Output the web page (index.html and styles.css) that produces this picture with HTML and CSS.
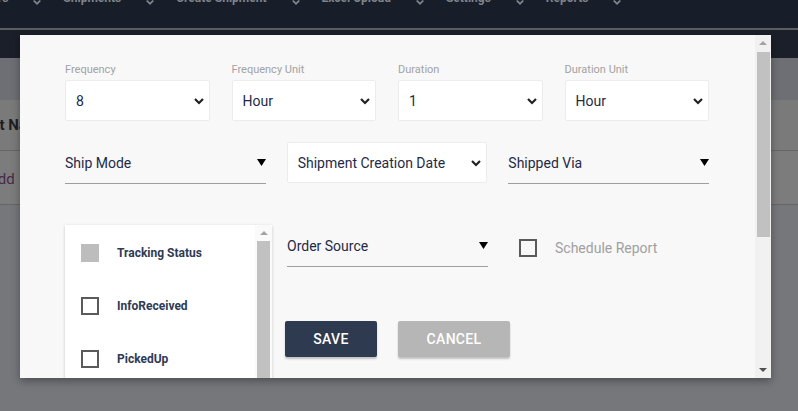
FILE: index.html
```html
<!DOCTYPE html>
<html lang="en">
<head>
    <meta charset="UTF-8">
    <meta name="viewport" content="width=device-width, initial-scale=1.0">
    <title>Schedule Report</title>
    <link rel="stylesheet" href="styles.css">
</head>
<body>
    <div class="page">
        <header class="topnav">
            <ul class="nav-links">
                <li>Orders <svg class="caret" viewBox="0 0 8 6"><path d="M0 1 L4 5 L8 1 L6.5 0 L4 2.5 L1.5 0 Z"/></svg></li>
                <li>Shipments <svg class="caret" viewBox="0 0 8 6"><path d="M0 1 L4 5 L8 1 L6.5 0 L4 2.5 L1.5 0 Z"/></svg></li>
                <li>Create Shipment <svg class="caret" viewBox="0 0 8 6"><path d="M0 1 L4 5 L8 1 L6.5 0 L4 2.5 L1.5 0 Z"/></svg></li>
                <li>Excel Upload <svg class="caret" viewBox="0 0 8 6"><path d="M0 1 L4 5 L8 1 L6.5 0 L4 2.5 L1.5 0 Z"/></svg></li>
                <li>Settings <svg class="caret" viewBox="0 0 8 6"><path d="M0 1 L4 5 L8 1 L6.5 0 L4 2.5 L1.5 0 Z"/></svg></li>
                <li>Reports <svg class="caret" viewBox="0 0 8 6"><path d="M0 1 L4 5 L8 1 L6.5 0 L4 2.5 L1.5 0 Z"/></svg></li>
            </ul>
        </header>
        <div class="subnav"></div>
        <div class="page-title"></div>
        <div class="table-head"><span>Report Name</span></div>
        <div class="table-row"><span>Add</span></div>
    </div>

    <div class="modal">
        <div class="modal-body">
            <div class="row-four">
                <div class="field">
                    <label>Frequency</label>
                    <div class="select-box"><span>8</span><svg class="chev" viewBox="0 0 10 7"><polyline points="1,1 5,5 9,1"/></svg></div>
                </div>
                <div class="field">
                    <label>Frequency Unit</label>
                    <div class="select-box"><span>Hour</span><svg class="chev" viewBox="0 0 10 7"><polyline points="1,1 5,5 9,1"/></svg></div>
                </div>
                <div class="field">
                    <label>Duration</label>
                    <div class="select-box"><span>1</span><svg class="chev" viewBox="0 0 10 7"><polyline points="1,1 5,5 9,1"/></svg></div>
                </div>
                <div class="field">
                    <label>Duration Unit</label>
                    <div class="select-box"><span>Hour</span><svg class="chev" viewBox="0 0 10 7"><polyline points="1,1 5,5 9,1"/></svg></div>
                </div>
            </div>

            <div class="row-three">
                <div class="md-select"><span>Ship Mode</span><svg class="tri" viewBox="0 0 9 7"><polygon points="0,0 9,0 4.5,7"/></svg></div>
                <div class="select-box tall"><span>Shipment Creation Date</span><svg class="chev" viewBox="0 0 10 7"><polyline points="1,1 5,5 9,1"/></svg></div>
                <div class="md-select"><span>Shipped Via</span><svg class="tri" viewBox="0 0 9 7"><polygon points="0,0 9,0 4.5,7"/></svg></div>
            </div>

            <div class="row-bottom">
                <div class="status-list">
                    <ul class="status-items">
                        <li><span class="check disabled"></span>Tracking Status</li>
                        <li><span class="check"></span>InfoReceived</li>
                        <li><span class="check"></span>PickedUp</li>
                        <li><span class="check"></span>InTransit</li>
                    </ul>
                    <div class="list-scroll">
                        <svg class="arrow" viewBox="0 0 8 4"><polygon points="0,4 8,4 4,0"/></svg>
                        <div class="list-thumb"></div>
                    </div>
                </div>
                <div class="middle-col">
                    <div class="md-select"><span>Order Source</span><svg class="tri" viewBox="0 0 9 7"><polygon points="0,0 9,0 4.5,7"/></svg></div>
                    <div class="actions">
                        <button class="btn btn-save">Save</button>
                        <button class="btn btn-cancel">Cancel</button>
                    </div>
                </div>
                <div class="schedule">
                    <span class="check"></span>
                    <span class="schedule-text">Schedule Report</span>
                </div>
            </div>
        </div>
        <div class="modal-scroll">
            <svg class="arrow up" viewBox="0 0 8 4"><polygon points="0,4 8,4 4,0"/></svg>
            <div class="modal-thumb"></div>
            <div class="spacer"></div>
            <svg class="arrow down" viewBox="0 0 8 4"><polygon points="0,0 8,0 4,4"/></svg>
        </div>
    </div>
</body>
</html>
```

FILE: styles.css
```css
body {
    margin: 0;
    font-family: Roboto, "Liberation Sans", Arial, sans-serif;
    background-color: #76777b;
    overflow: hidden;
}
.page {
    height: 411px;
}
.topnav {
    height: 28px;
    background-color: #171e29;
    border-bottom: 2px solid #5c5d60;
    overflow: hidden;
}
.nav-links {
    list-style: none;
    margin: -10px 0 0 -28px;
    padding: 0;
    display: flex;
}
.nav-links li {
    display: flex;
    align-items: center;
    line-height: 16px;
    font-size: 12px;
    font-weight: 700;
    color: #80838a;
    margin-right: 22px;
}
.caret {
    width: 8px;
    height: 6px;
    margin: 9px 0 0 25px;
    fill: #80838a;
}
.subnav {
    height: 28px;
    background-color: #1b1f29;
}
.page-title {
    height: 42px;
    background-color: #6e6f74;
}
.table-head {
    height: 50px;
    background-color: #7a7a7a;
    border-bottom: 1px solid #666;
    display: flex;
    align-items: center;
    margin-left: -41px;
    font-size: 15px;
    font-weight: 700;
    color: #1e1e22;
}
.table-row {
    height: 54px;
    background-color: #7c7c7c;
    border-bottom: 1px solid #666;
    display: flex;
    align-items: center;
    margin-left: -12px;
    padding-top: 2px;
    box-sizing: border-box;
    font-size: 15px;
    color: #47294a;
}

.modal {
    position: absolute;
    left: 20px;
    top: 35px;
    width: 751px;
    height: 343px;
    background-color: #f8f8f8;
    box-shadow: 0 3px 8px rgba(0, 0, 0, 0.35);
    display: flex;
    overflow: hidden;
}
.modal-body {
    flex: 1;
    padding: 28px 0 0 45px;
}
.row-four {
    width: 644px;
    display: grid;
    grid-template-columns: repeat(4, 1fr);
    gap: 22px;
}
.field label {
    display: block;
    font-size: 11px;
    line-height: 13px;
    color: #a2a2a2;
    margin-bottom: 4px;
}
.select-box {
    height: 41px;
    box-sizing: border-box;
    background: #fff;
    border: 1px solid #ececec;
    border-radius: 2px;
    padding: 1px 5px 0 10px;
    display: flex;
    align-items: center;
    justify-content: space-between;
    font-size: 14px;
    color: #1f2a47;
}
.chev {
    width: 10px;
    height: 7px;
    fill: none;
    stroke: #222;
    stroke-width: 2.2;
}
.row-three {
    width: 644px;
    margin-top: 21px;
    display: grid;
    grid-template-columns: repeat(3, 1fr);
    gap: 21px;
}
.md-select {
    height: 42px;
    box-sizing: border-box;
    border-bottom: 1px solid #9e9e9e;
    padding-top: 12px;
    display: flex;
    justify-content: space-between;
    font-size: 14px;
    line-height: 18px;
    color: #1f2a47;
}
.tri {
    width: 9px;
    height: 7px;
    margin-top: 5px;
    fill: #000;
}
.row-bottom {
    margin-top: 41px;
    display: flex;
    align-items: flex-start;
}
.status-list {
    width: 207px;
    height: 180px;
    background: #fff;
    box-shadow: 0 1px 3px rgba(0, 0, 0, 0.2);
    display: flex;
}
.status-items {
    flex: 1;
    list-style: none;
    margin: 0;
    padding: 0;
}
.status-items li {
    height: 53px;
    display: flex;
    align-items: center;
    padding-left: 16px;
    font-size: 12px;
    font-weight: 700;
    color: #2f3a55;
    position: relative;
    top: 1px;
}
.check {
    width: 18px;
    height: 18px;
    box-sizing: border-box;
    border: 2px solid #5a5a5a;
    margin-right: 18px;
    flex-shrink: 0;
}
.check.disabled {
    border: none;
    background: #bdbdbd;
}
.list-scroll {
    width: 17px;
    background: #fafafa;
    display: flex;
    flex-direction: column;
    align-items: center;
}
.list-scroll .arrow {
    width: 8px;
    height: 4px;
    margin: 6px 0 6px;
    fill: #a3a3a3;
}
.list-thumb {
    width: 13px;
    flex: 1;
    background: #c1c1c1;
}
.middle-col {
    width: 225px;
    margin-left: 13px;
}
.middle-col .md-select {
    width: 201px;
    margin-left: 2px;
}
.actions {
    margin-top: 54px;
    display: flex;
    gap: 21px;
}
.btn {
    height: 36px;
    border: none;
    border-radius: 2px;
    font-family: Roboto, "Liberation Sans", Arial, sans-serif;
    font-size: 14px;
    font-weight: 500;
    text-transform: uppercase;
    letter-spacing: 0.3px;
    color: #fff;
    box-shadow: 0 2px 2px rgba(0, 0, 0, 0.22);
}
.btn-save {
    width: 92px;
    background-color: #2e3a50;
}
.btn-cancel {
    width: 112px;
    background-color: #b6b6b6;
}
.schedule {
    margin-left: 9px;
    margin-top: 14px;
    display: flex;
    align-items: center;
}
.schedule-text {
    font-size: 14px;
    color: #a0a0a0;
}
.modal-scroll {
    width: 16px;
    background: #f1f1f1;
    display: flex;
    flex-direction: column;
    align-items: center;
}
.modal-scroll .arrow {
    width: 8px;
    height: 4px;
    flex-shrink: 0;
}
.modal-scroll .up {
    margin: 6px 0 7px;
    fill: #a3a3a3;
}
.modal-scroll .down {
    margin: 0 0 6px;
    fill: #505050;
}
.modal-thumb {
    width: 13px;
    height: 185px;
    background: #c1c1c1;
}
.spacer {
    flex: 1;
}
```
